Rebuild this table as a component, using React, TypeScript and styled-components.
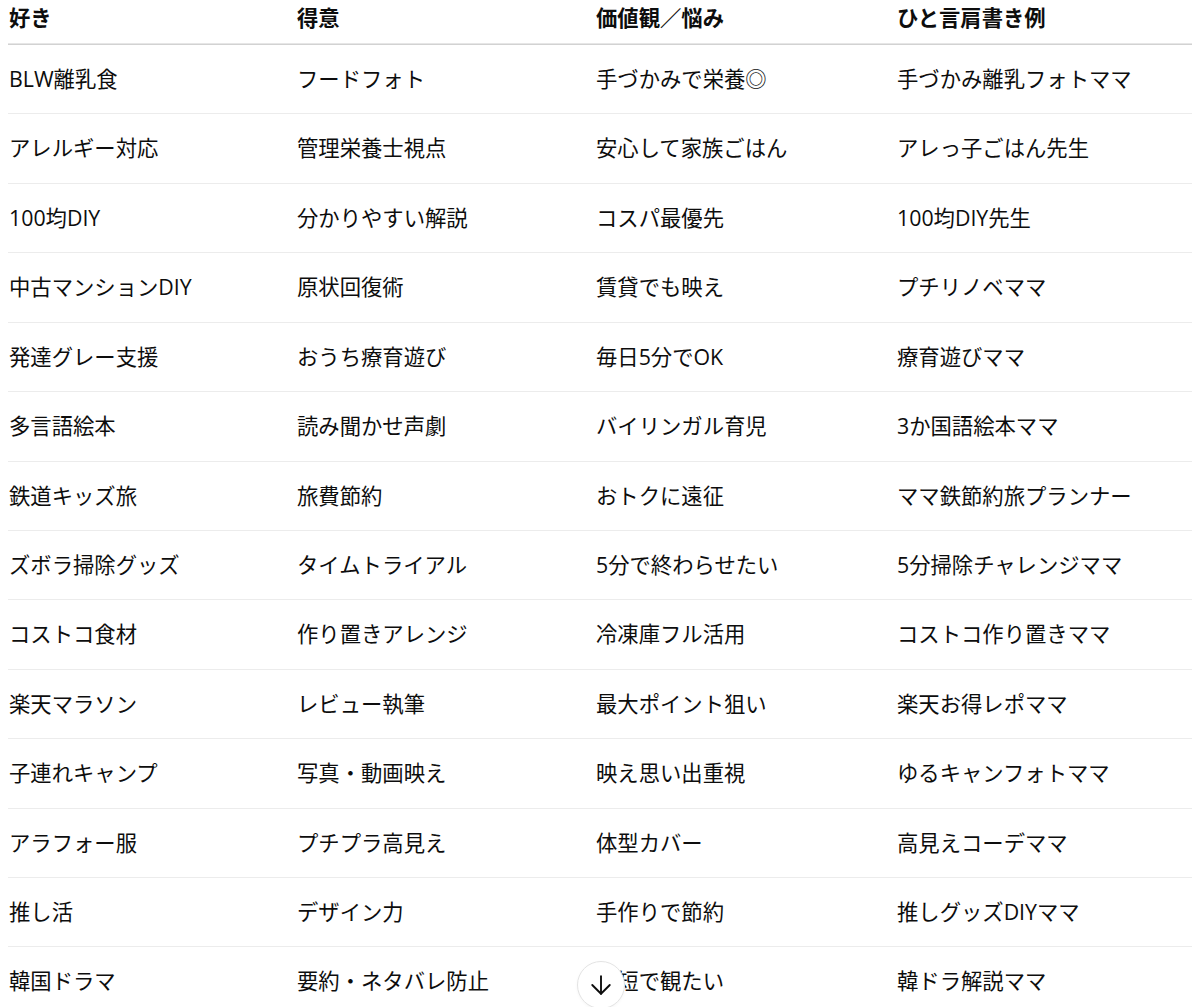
import React from "react";
import styled, { createGlobalStyle } from "styled-components";
import { ArrowDown } from "lucide-react";

const Global = createGlobalStyle`
  html, body { margin: 0; padding: 0; background: #ffffff; }
  body {
    font-family: "Open Sans", "Noto Sans CJK JP", sans-serif;
    color: #0d0d0d;
    overflow: hidden;
  }
`;

const Page = styled.div`
  padding: 0 8px;
  height: 1007px;
  overflow: hidden;
`;

const Table = styled.table`
  width: 100%;
  border-collapse: collapse;
  table-layout: fixed;
`;

const HeadCell = styled.th`
  text-align: left;
  font-weight: 700;
  font-size: 21.33px;
  line-height: 36px;
  padding: 0 0 8px 1px;
  border-bottom: 1px solid #d2d2d2;
  box-shadow: inset 0 -1px 0 #e6e6e6;
`;

const Row = styled.tr`
  border-bottom: 1px solid #ececec;
`;

const Cell = styled.td`
  font-size: 21.33px;
  font-weight: 400;
  line-height: 36.42px;
  padding: 16px 8px 16px 1px;
  white-space: nowrap;
`;

const ScrollButton = styled.button`
  position: fixed;
  left: 577px;
  top: 961px;
  width: 48px;
  height: 48px;
  border-radius: 50%;
  border: 1px solid #e3e3e3;
  background: #ffffff;
  display: flex;
  align-items: center;
  justify-content: center;
  padding: 0;
  color: #0d0d0d;
  box-shadow: 0 1px 3px rgba(0, 0, 0, 0.04);
`;

const widths = [288, 299, 301];

const headers = ["好き", "得意", "価値観／悩み", "ひと言肩書き例"];

const rows: string[][] = [
  ["BLW離乳食", "フードフォト", "手づかみで栄養◎", "手づかみ離乳フォトママ"],
  ["アレルギー対応", "管理栄養士視点", "安心して家族ごはん", "アレっ子ごはん先生"],
  ["100均DIY", "分かりやすい解説", "コスパ最優先", "100均DIY先生"],
  ["中古マンションDIY", "原状回復術", "賃貸でも映え", "プチリノベママ"],
  ["発達グレー支援", "おうち療育遊び", "毎日5分でOK", "療育遊びママ"],
  ["多言語絵本", "読み聞かせ声劇", "バイリンガル育児", "3か国語絵本ママ"],
  ["鉄道キッズ旅", "旅費節約", "おトクに遠征", "ママ鉄節約旅プランナー"],
  ["ズボラ掃除グッズ", "タイムトライアル", "5分で終わらせたい", "5分掃除チャレンジママ"],
  ["コストコ食材", "作り置きアレンジ", "冷凍庫フル活用", "コストコ作り置きママ"],
  ["楽天マラソン", "レビュー執筆", "最大ポイント狙い", "楽天お得レポママ"],
  ["子連れキャンプ", "写真・動画映え", "映え思い出重視", "ゆるキャンフォトママ"],
  ["アラフォー服", "プチプラ高見え", "体型カバー", "高見えコーデママ"],
  ["推し活", "デザイン力", "手作りで節約", "推しグッズDIYママ"],
  ["韓国ドラマ", "要約・ネタバレ防止", "時短で観たい", "韓ドラ解説ママ"],
];

export default function App() {
  return (
    <>
      <Global />
      <Page>
        <Table>
          <colgroup>
            {widths.map((w, i) => (
              <col key={i} style={{ width: w }} />
            ))}
            <col />
          </colgroup>
          <thead>
            <tr>
              {headers.map((h) => (
                <HeadCell key={h}>{h}</HeadCell>
              ))}
            </tr>
          </thead>
          <tbody>
            {rows.map((r, i) => (
              <Row key={i}>
                {r.map((c, j) => (
                  <Cell key={j}>{c}</Cell>
                ))}
              </Row>
            ))}
          </tbody>
        </Table>
      </Page>
      <ScrollButton aria-label="scroll down">
        <ArrowDown size={30} strokeWidth={1.5} />
      </ScrollButton>
    </>
  );
}
